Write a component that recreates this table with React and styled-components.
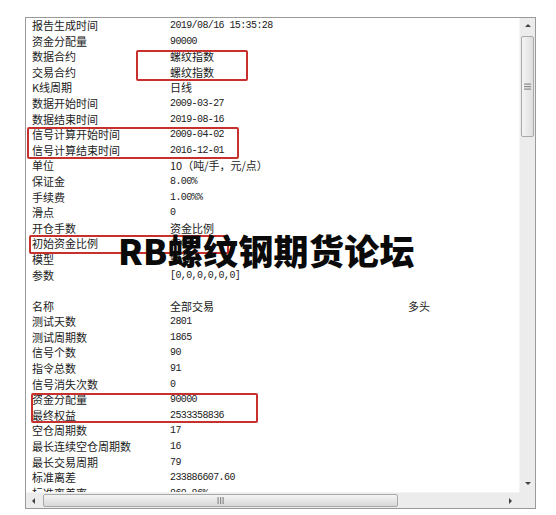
import React from 'react';
import styled, { createGlobalStyle } from 'styled-components';

const GlobalStyle = createGlobalStyle`
  html, body {
    margin: 0;
    padding: 0;
    background: #ffffff;
  }
`;

const Page = styled.div`
  width: 556px;
  height: 515px;
  padding: 17px 0 0 25px;
  box-sizing: border-box;
  position: relative;
  overflow: hidden;
`;

const Frame = styled.div`
  width: 511px;
  height: 492px;
  box-sizing: border-box;
  border: 1px solid #9a9a9a;
  display: grid;
  grid-template-columns: 1fr 16px;
  grid-template-rows: 1fr 16px;
  background: #fff;
`;

const Content = styled.div`
  position: relative;
  overflow: hidden;
  padding: 0 0 0 6px;
`;

const Row = styled.div`
  display: grid;
  grid-template-columns: 138px 238px 1fr;
  height: 15.6px;
  align-items: center;
  white-space: nowrap;
`;

const Label = styled.span`
  font-family: "Noto Sans CJK SC", sans-serif;
  font-size: 11px;
  line-height: 15.6px;
  color: #222;
`;

const Value = styled.span`
  font-family: ${(p) => (p.$cjk ? '"Noto Sans CJK SC", sans-serif' : '"Liberation Mono", "Noto Sans CJK SC", monospace')};
  font-size: ${(p) => (p.$cjk ? '11px' : '10px')};
  letter-spacing: ${(p) => (p.$cjk ? '0' : '-0.6px')};
  line-height: 15.6px;
  color: #222;
`;

const Highlight = styled.div`
  position: absolute;
  border: 2px solid #c8302e;
  border-radius: 2px;
  box-sizing: border-box;
  pointer-events: none;
`;

const Watermark = styled.div`
  position: absolute;
  left: 92px;
  top: 212px;
  font-family: "Noto Sans CJK SC", sans-serif;
  font-weight: 900;
  font-size: 35px;
  line-height: 40px;
  color: #0a0a0a;
  white-space: nowrap;
  letter-spacing: 0.3px;
`;

const VScroll = styled.div`
  background: #ececec;
  display: flex;
  flex-direction: column;
  align-items: center;
  border-left: 1px solid #f4f4f4;
`;

const HScroll = styled.div`
  background: #ececec;
  display: flex;
  align-items: center;
  border-top: 1px solid #f4f4f4;
`;

const Corner = styled.div`
  background: #ececec;
`;

const ArrowBox = styled.div`
  width: 16px;
  height: 16px;
  flex: none;
  display: flex;
  align-items: center;
  justify-content: center;
`;

const VThumb = styled.div`
  width: 13px;
  height: 101px;
  margin-top: 2px;
  box-sizing: border-box;
  border: 1px solid #a9a9a9;
  border-radius: 2px;
  background: linear-gradient(to right, #f4f4f4, #dedede);
  display: flex;
  align-items: center;
  justify-content: center;
`;

const HThumb = styled.div`
  width: 355px;
  height: 13px;
  margin-left: 1px;
  box-sizing: border-box;
  border: 1px solid #a9a9a9;
  border-radius: 2px;
  background: linear-gradient(to bottom, #f4f4f4, #d8d8d8);
  display: flex;
  align-items: center;
  justify-content: center;
`;

const Spacer = styled.div`
  flex: 1;
`;

const Arrow = ({ dir }) => {
  const pts = {
    up: '1,5 4,2 7,5',
    down: '1,2 4,5 7,2',
    left: '5,1 2,4 5,7',
    right: '2,1 5,4 2,7',
  }[dir];
  return (
    <svg width="8" height="8" viewBox="0 0 8 8">
      <polygon points={pts} fill="#404040" />
    </svg>
  );
};

const Grip = ({ vertical }) => (
  <svg width={vertical ? 7 : 8} height={vertical ? 8 : 7} viewBox={vertical ? '0 0 7 8' : '0 0 8 7'}>
    {[0, 2.5, 5].map((o) =>
      vertical ? (
        <rect key={o} x="0" y={o + 0.5} width="7" height="1.2" fill="#8a8a8a" />
      ) : (
        <rect key={o} x={o + 0.5} y="0" width="1.2" height="7" fill="#8a8a8a" />
      )
    )}
  </svg>
);

const rows = [
  ['报告生成时间', '2019/08/16 15:35:28'],
  ['资金分配量', '90000'],
  ['数据合约', '螺纹指数', true],
  ['交易合约', '螺纹指数', true],
  ['K线周期', '日线', true],
  ['数据开始时间', '2009-03-27'],
  ['数据结束时间', '2019-08-16'],
  ['信号计算开始时间', '2009-04-02'],
  ['信号计算结束时间', '2016-12-01'],
  ['单位', '10（吨/手，元/点）', true],
  ['保证金', '8.00%'],
  ['手续费', '1.00%%'],
  ['滑点', '0'],
  ['开仓手数', '资金比例', true],
  ['初始资金比例', '100%'],
  ['模型', '默认', true],
  ['参数', '[0,0,0,0,0,0]'],
  ['', ''],
  ['名称', '全部交易', true, '多头'],
  ['测试天数', '2801'],
  ['测试周期数', '1865'],
  ['信号个数', '90'],
  ['指令总数', '91'],
  ['信号消失次数', '0'],
  ['资金分配量', '90000'],
  ['最终权益', '2533358836'],
  ['空仓周期数', '17'],
  ['最长连续空仓周期数', '16'],
  ['最长交易周期', '79'],
  ['标准离差', '233886607.60'],
  ['标准离差率', '869.86%'],
];

const App = () => (
  <>
    <GlobalStyle />
    <Page>
      <Frame>
        <Content>
          {rows.map(([label, value, cjk, extra], i) => (
            <Row key={i}>
              <Label>{label}</Label>
              <Value $cjk={cjk}>{value}</Value>
              <Value $cjk>{extra}</Value>
            </Row>
          ))}
          <Highlight style={{ left: 110, top: 32, width: 112, height: 31 }} />
          <Highlight style={{ left: 1, top: 109, width: 212, height: 32 }} />
          <Highlight style={{ left: 3, top: 217, width: 200, height: 19 }} />
          <Highlight style={{ left: 5, top: 375, width: 227, height: 30 }} />
          <Watermark>RB螺纹钢期货论坛</Watermark>
        </Content>
        <VScroll>
          <ArrowBox><Arrow dir="up" /></ArrowBox>
          <VThumb><Grip vertical /></VThumb>
          <Spacer />
          <ArrowBox><Arrow dir="down" /></ArrowBox>
        </VScroll>
        <HScroll>
          <ArrowBox><Arrow dir="left" /></ArrowBox>
          <HThumb><Grip /></HThumb>
          <Spacer />
          <ArrowBox><Arrow dir="right" /></ArrowBox>
        </HScroll>
        <Corner />
      </Frame>
    </Page>
  </>
);

export default App;
